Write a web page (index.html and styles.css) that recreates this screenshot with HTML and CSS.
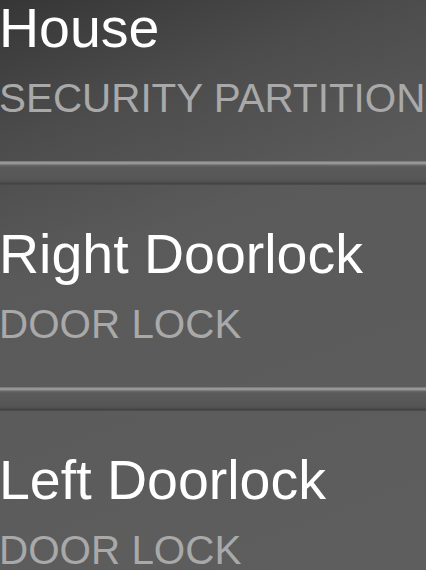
FILE: index.html
```html
<!DOCTYPE html>
<html>
<head>
<meta charset="utf-8">
<link rel="stylesheet" href="styles.css">
</head>
<body>
<div class="list">
  <div class="item">
    <div class="title">House</div>
    <div class="subtitle">SECURITY PARTITION</div>
  </div>
  <div class="divider"></div>
  <div class="item">
    <div class="title">Right Doorlock</div>
    <div class="subtitle">DOOR LOCK</div>
  </div>
  <div class="divider"></div>
  <div class="item">
    <div class="title">Left Doorlock</div>
    <div class="subtitle">DOOR LOCK</div>
  </div>
</div>
</body>
</html>
```
FILE: styles.css
```css
html, body {
  margin: 0;
  padding: 0;
  height: 100%;
  overflow: hidden;
}
body {
  background: linear-gradient(160deg, #363636 0%, #4c4c4c 20%, #5a5a5a 40%, #5e5e5e 100%);
  font-family: "Liberation Sans", Arial, sans-serif;
}
.list {
  display: flex;
  flex-direction: column;
  margin-top: -41px;
}
.item {
  display: flex;
  flex-direction: column;
  gap: 14px;
  padding: 37px 0 39px 0;
}
.title {
  color: #ffffff;
  font-size: 55.5px;
  line-height: 64px;
  white-space: nowrap;
  margin-left: -1px;
}
.subtitle {
  color: #a9a9a9;
  font-size: 40.4px;
  line-height: 48px;
  white-space: nowrap;
  margin-left: -1px;
}
.divider {
  height: 24px;
  background: linear-gradient(to bottom,
    #6e6e6e 0px, #8c8c8c 1px, #a0a0a0 2px, #8e8e8e 3px, #6a6a6a 4px,
    #5a5a5a 6px, #565656 18px, #505050 21px, #454545 22px, #424242 23px, #525252 24px);
}
```
